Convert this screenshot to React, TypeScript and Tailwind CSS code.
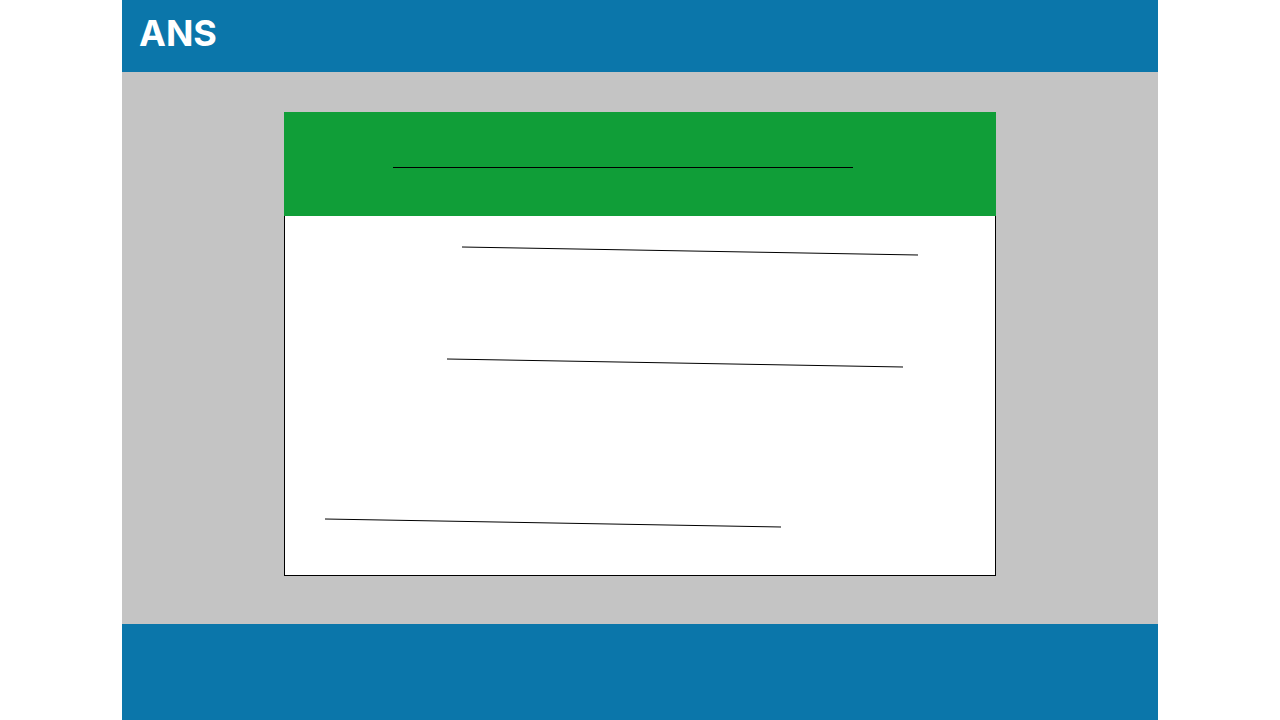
export default function App() {
  return (
    <div className="min-h-screen bg-white" style={{ fontFamily: "Inter, 'Liberation Sans', sans-serif" }}>
      <div className="mx-auto w-[1036px]">
        <header className="flex h-[72px] items-center bg-[#0b76aa] pl-[17px] pb-[6px]">
          <h1 className="text-[36px] font-bold leading-none text-white">ANS</h1>
        </header>
        <main className="flex justify-center bg-[#c4c4c4] pt-10 pb-12">
          <div className="w-[712px]">
            <div className="flex h-[104px] items-start bg-[#109e38] pt-[55px] pl-[109px]">
              <div className="h-px w-[460px] bg-black" />
            </div>
            <div className="h-[360px] border-x border-b border-black bg-white pt-[30px]">
              <svg className="ml-[176px] block" width="458" height="10">
                <line x1="1" y1="1" x2="457" y2="9" stroke="#000" strokeWidth="1" />
              </svg>
              <svg className="ml-[161px] mt-[102px] block" width="458" height="10">
                <line x1="1" y1="1" x2="457" y2="9" stroke="#000" strokeWidth="1" />
              </svg>
              <svg className="ml-[39px] mt-[150px] block" width="458" height="10">
                <line x1="1" y1="1" x2="457" y2="9" stroke="#000" strokeWidth="1" />
              </svg>
            </div>
          </div>
        </main>
        <footer className="h-24 bg-[#0b76aa]" />
      </div>
    </div>
  );
}
